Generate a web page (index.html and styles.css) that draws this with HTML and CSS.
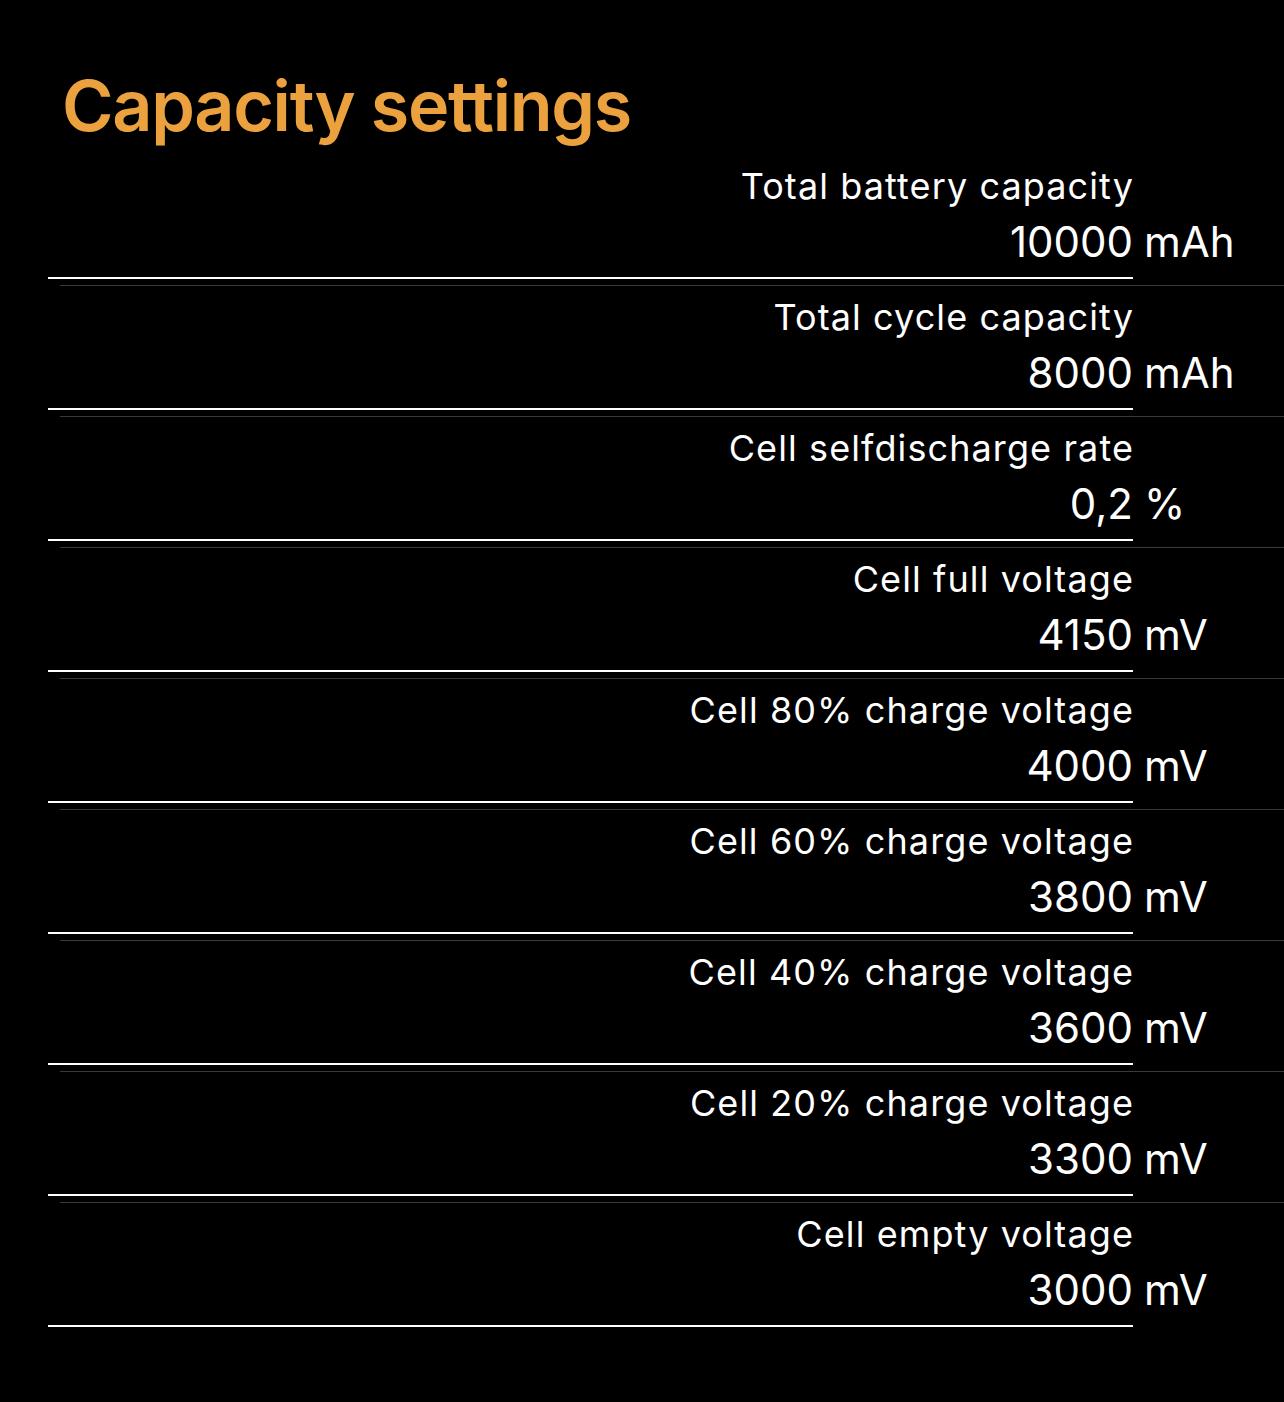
FILE: index.html
```html
<!DOCTYPE html>
<html lang="en">
<head>
  <meta charset="UTF-8" />
  <meta name="viewport" content="width=device-width, initial-scale=1.0"/>
  <title>Capacity settings</title>
  <link rel="stylesheet" href="styles.css">
</head>
<body>
  <div class="page">
    <h1 class="title">Capacity settings</h1>

    <div class="list">
      <div class="row">
        <div class="row-body">
          <div class="field">
            <div class="label">Total battery capacity</div>
            <div class="value">10000</div>
          </div>
          <div class="unit">mAh</div>
        </div>
      </div>

      <div class="row">
        <div class="row-body">
          <div class="field">
            <div class="label">Total cycle capacity</div>
            <div class="value">8000</div>
          </div>
          <div class="unit">mAh</div>
        </div>
      </div>

      <div class="row">
        <div class="row-body">
          <div class="field">
            <div class="label">Cell selfdischarge rate</div>
            <div class="value">0,2</div>
          </div>
          <div class="unit">%</div>
        </div>
      </div>

      <div class="row">
        <div class="row-body">
          <div class="field">
            <div class="label">Cell full voltage</div>
            <div class="value">4150</div>
          </div>
          <div class="unit">mV</div>
        </div>
      </div>

      <div class="row">
        <div class="row-body">
          <div class="field">
            <div class="label">Cell 80% charge voltage</div>
            <div class="value">4000</div>
          </div>
          <div class="unit">mV</div>
        </div>
      </div>

      <div class="row">
        <div class="row-body">
          <div class="field">
            <div class="label">Cell 60% charge voltage</div>
            <div class="value">3800</div>
          </div>
          <div class="unit">mV</div>
        </div>
      </div>

      <div class="row">
        <div class="row-body">
          <div class="field">
            <div class="label">Cell 40% charge voltage</div>
            <div class="value">3600</div>
          </div>
          <div class="unit">mV</div>
        </div>
      </div>

      <div class="row">
        <div class="row-body">
          <div class="field">
            <div class="label">Cell 20% charge voltage</div>
            <div class="value">3300</div>
          </div>
          <div class="unit">mV</div>
        </div>
      </div>

      <div class="row">
        <div class="row-body">
          <div class="field">
            <div class="label">Cell empty voltage</div>
            <div class="value">3000</div>
          </div>
          <div class="unit">mV</div>
        </div>
      </div>
    </div>
  </div>
</body>
</html>
```

FILE: styles.css
```css
body {
  margin: 0;
  background: #000;
  color: #fff;
  font-family: Inter, "Noto Sans", sans-serif;
}

.page {
  width: 1284px;
  min-height: 1402px;
}

.title {
  margin: 0;
  padding: 66px 0 0 62px;
  font-size: 70px;
  line-height: 80px;
  font-weight: 600;
  letter-spacing: -1.3px;
  color: #eba23e;
}

.list {
  margin-top: 9px;
}

/* separator between rows, inset like a table view */
.row + .row::before {
  content: "";
  display: block;
  height: 1px;
  margin-left: 60px;
  background: #3a3a3c;
}

.row-body {
  display: flex;
  align-items: flex-end;
  padding: 9px 0 6px 48px;
}

.field {
  width: 1085px;
  padding-bottom: 10px;
  border-bottom: 2px solid #fff;
  text-align: right;
}

.label {
  font-size: 36px;
  line-height: 44px;
  letter-spacing: 1.1px;
  margin-right: -1px;
  margin-bottom: 9px;
}

.value {
  font-size: 42px;
  line-height: 50px;
}

.unit {
  font-size: 42px;
  line-height: 50px;
  padding: 0 0 12px 11px;
}
```
